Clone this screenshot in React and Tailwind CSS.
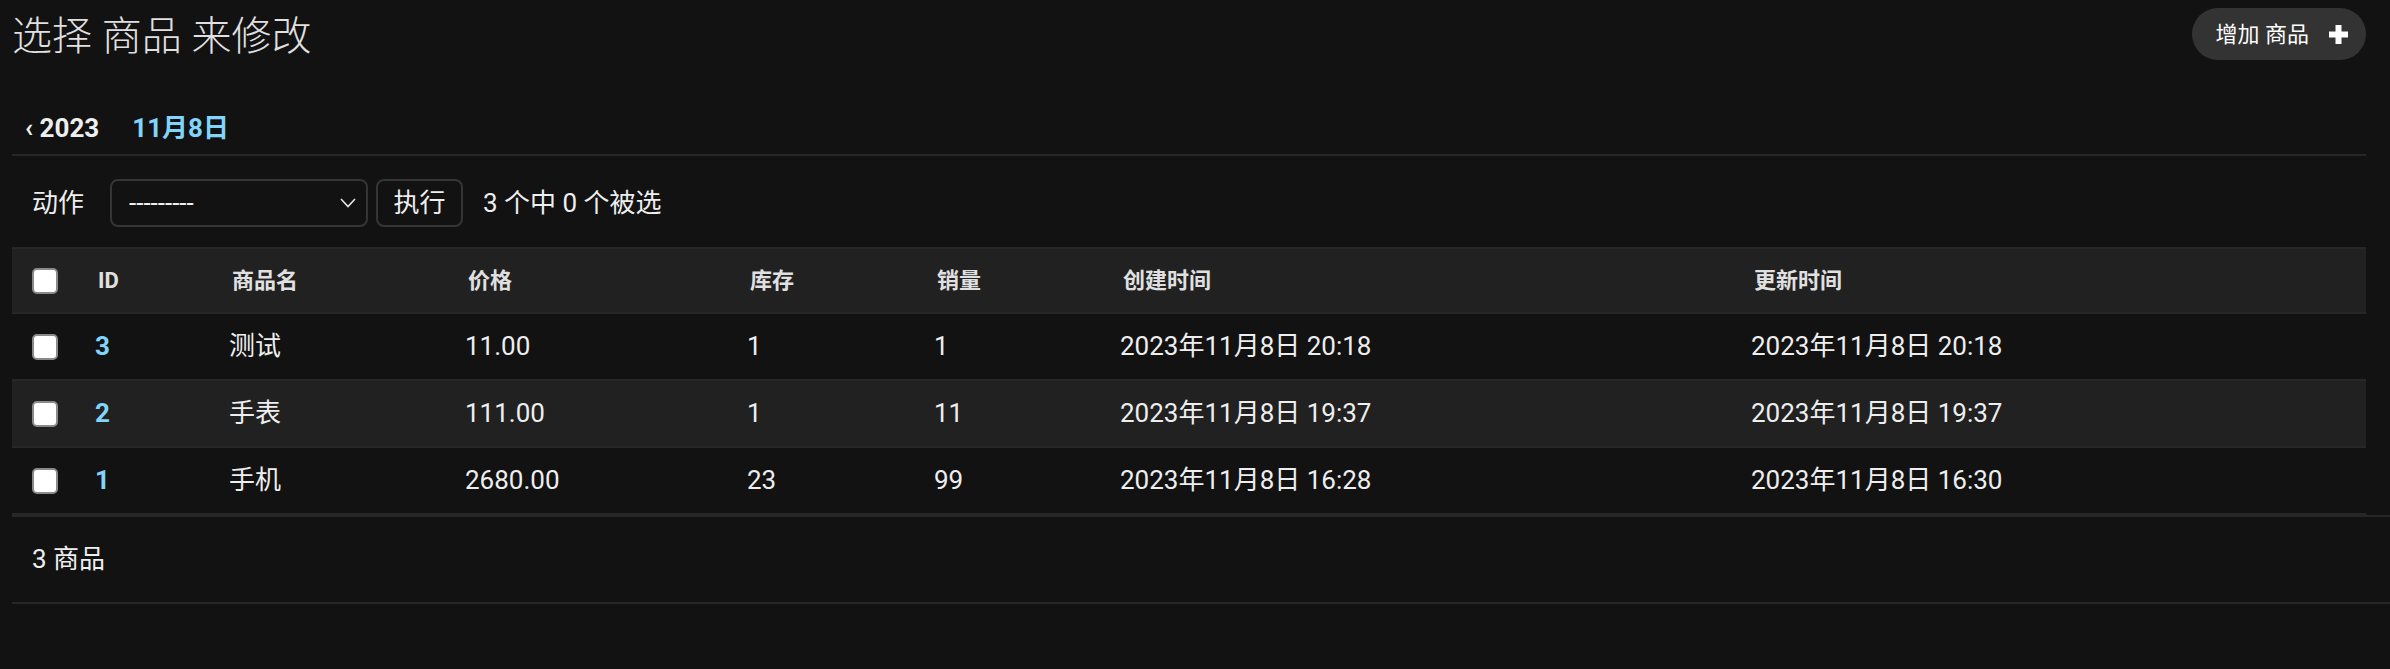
import React from 'react';

const rows = [
  { id: 3, name: '测试', price: '11.00', stock: '1', sales: '1', created: '2023年11月8日 20:18', updated: '2023年11月8日 20:18' },
  { id: 2, name: '手表', price: '111.00', stock: '1', sales: '11', created: '2023年11月8日 19:37', updated: '2023年11月8日 19:37' },
  { id: 1, name: '手机', price: '2680.00', stock: '23', sales: '99', created: '2023年11月8日 16:28', updated: '2023年11月8日 16:30' },
];

const cols = 'grid grid-cols-[63px_134px_236px_282px_187px_186px_631px_1fr] items-center';

function Checkbox() {
  return <div className="w-[26px] h-[26px] rounded-[5px] border-2 border-[#8a8a8a] bg-white" />;
}

function PlusIcon() {
  return (
    <svg width="21" height="21" viewBox="0 0 21 21">
      <path d="M7.5 1h6v6.5H20v6h-6.5V20h-6v-6.5H1v-6h6.5z" fill="#fff" />
    </svg>
  );
}

export default function App() {
  return (
    <div className="h-[669px] overflow-hidden bg-[#121212] text-[#eeeeee] pl-3 pr-6 pt-2 font-[family-name:Roboto,'Noto_Sans_CJK_SC',sans-serif]">
      <div className="flex justify-between items-start">
        <h1 className="mt-[5px] text-[40px] leading-[48px] font-light text-[#e0e0e0]">选择 商品 来修改</h1>
        <a className="h-[52px] rounded-full bg-[#333333] pl-6 pr-[17px] flex items-center gap-[19px] text-[22px] text-white">
          增加 商品 <PlusIcon />
        </a>
      </div>

      {/* date hierarchy */}
      <div className="mt-[51px] pb-[10px] border-b-2 border-[#272727]">
        <div className="flex gap-[33px] pl-[13px] text-[26px] leading-[32px] font-bold">
          <span className="text-[#eeeeee]">‹ 2023</span>
          <span className="text-[#81d4fa]">11月8日</span>
        </div>
      </div>

      {/* actions */}
      <div className="mt-[23px] h-[48px] pl-5 flex items-center text-[26px]">
        <span className="mr-[26px]">动作</span>
        <div className="w-[258px] h-[48px] rounded-lg border-2 border-[#353535] flex items-center justify-between pl-[17px] pr-[10px]">
          <span>---------</span>
          <svg width="16" height="10" viewBox="0 0 16 10">
            <polyline points="1,1 8,8.5 15,1" fill="none" stroke="#e6e6e6" strokeWidth="1.6" />
          </svg>
        </div>
        <div className="ml-2 w-[87px] h-[48px] rounded-lg border-2 border-[#353535] flex items-center justify-center">执行</div>
        <span className="ml-5">3 个中 0 个被选</span>
      </div>

      {/* table */}
      <div className="mt-5">
        <div className={`${cols} h-[67px] bg-[#212121] border-y-2 border-[#272727] text-[22px] font-bold text-[#e0e0e0]`}>
          <div className="pl-5"><Checkbox /></div>
          <div className="pl-[23px]">ID</div>
          <div className="pl-[23px]">商品名</div>
          <div className="pl-[23px]">价格</div>
          <div className="pl-[23px]">库存</div>
          <div className="pl-[23px]">销量</div>
          <div className="pl-[23px]">创建时间</div>
          <div className="pl-[23px]">更新时间</div>
        </div>
        {rows.map((r, i) => (
          <div key={r.id} className={`${cols} h-[67px] border-b-2 border-[#272727] text-[26px] ${i === 1 ? 'bg-[#212121]' : ''}`}>
            <div className="pl-5"><Checkbox /></div>
            <div className="pl-5 font-bold text-[#81d4fa]">{r.id}</div>
            <div className="pl-5">{r.name}</div>
            <div className="pl-5">{r.price}</div>
            <div className="pl-5">{r.stock}</div>
            <div className="pl-5">{r.sales}</div>
            <div className="pl-5">{r.created}</div>
            <div className="pl-5">{r.updated}</div>
          </div>
        ))}
      </div>

      {/* paginator */}
      <div className="-mr-6 h-[89px] border-y-2 border-[#272727] pl-5 flex items-center text-[26px]">3 商品</div>
    </div>
  );
}
